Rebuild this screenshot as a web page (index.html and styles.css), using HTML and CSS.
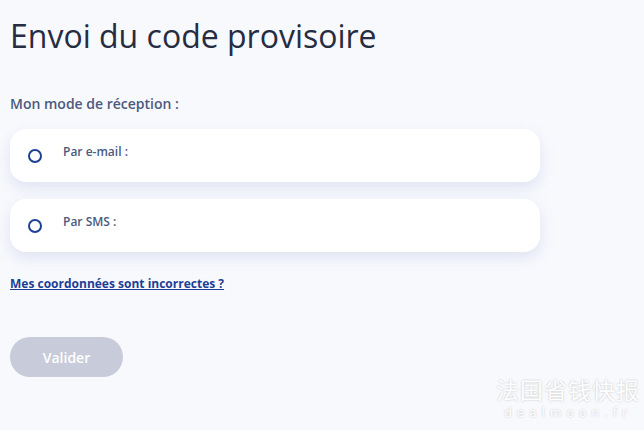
FILE: index.html
```html
<!DOCTYPE html>
<html lang="fr">
<head>
<meta charset="utf-8">
<link rel="stylesheet" href="styles.css">
</head>
<body>
<main class="page">
  <h1 class="title">Envoi du code provisoire</h1>
  <p class="label">Mon mode de réception :</p>
  <div class="options">
    <label class="card">
      <span class="radio"></span>
      <span class="card-text">Par e-mail :</span>
    </label>
    <label class="card">
      <span class="radio"></span>
      <span class="card-text">Par SMS :</span>
    </label>
  </div>
  <a class="link" href="#">Mes coordonnées sont incorrectes ?</a>
  <button class="btn" type="button">Valider</button>
</main>
<div class="watermark">
  <div class="wm-cn">法国省钱快报</div>
  <div class="wm-en">dealmoon.fr</div>
</div>
</body>
</html>
```
FILE: styles.css
```css
html, body {
  margin: 0;
  padding: 0;
}
body {
  background: #f8f9fd;
  font-family: "Open Sans", "Noto Sans", sans-serif;
  width: 644px;
  height: 430px;
  overflow: hidden;
  position: relative;
}
.page {
  padding: 14px 104px 0 10px;
  display: flex;
  flex-direction: column;
  align-items: flex-start;
}
.title {
  margin: 0;
  font-size: 32px;
  font-weight: 400;
  line-height: 44px;
  color: #262c42;
}
.label {
  margin: 37px 0 0;
  font-size: 14px;
  font-weight: 600;
  line-height: 18px;
  color: #4b5a7e;
}
.options {
  align-self: stretch;
  margin-top: 16px;
  display: flex;
  flex-direction: column;
  gap: 17px;
}
.card {
  height: 53px;
  background: #fff;
  border-radius: 16px;
  box-shadow: 0 6px 14px rgba(180, 190, 225, 0.35);
  display: flex;
  align-items: flex-start;
  padding: 0 0 0 18px;
  box-sizing: border-box;
}
.radio {
  width: 10px;
  height: 10px;
  border: 2.5px solid #1d3f95;
  border-radius: 50%;
  margin-top: 20px;
  flex: none;
}
.card-text {
  margin-left: 21px;
  margin-top: 15px;
  font-size: 12px;
  font-weight: 600;
  line-height: 16px;
  color: #4b5a7e;
}
.link {
  margin-top: 24px;
  font-size: 12px;
  font-weight: 700;
  line-height: 16px;
  color: #1d3f95;
  text-decoration: underline;
}
.btn {
  margin-top: 45px;
  width: 113px;
  height: 40px;
  border: 0;
  border-radius: 20px;
  background: #c8cbda;
  color: #fff;
  font-family: "Open Sans", "Noto Sans", sans-serif;
  font-size: 14px;
  font-weight: 600;
  padding: 0;
}
.watermark {
  position: absolute;
  right: 4px;
  top: 375px;
  color: #fff;
  text-align: center;
  text-shadow: 0 0 2px rgba(0,0,0,0.25);
}
.wm-cn {
  font-family: "Noto Sans CJK SC", sans-serif;
  font-size: 23px;
  line-height: 28px;
  letter-spacing: 1px;
}
.wm-en {
  margin-top: 3px;
  font-family: "DejaVu Sans", sans-serif;
  font-size: 12px;
  line-height: 15px;
  letter-spacing: 5px;
}
```
